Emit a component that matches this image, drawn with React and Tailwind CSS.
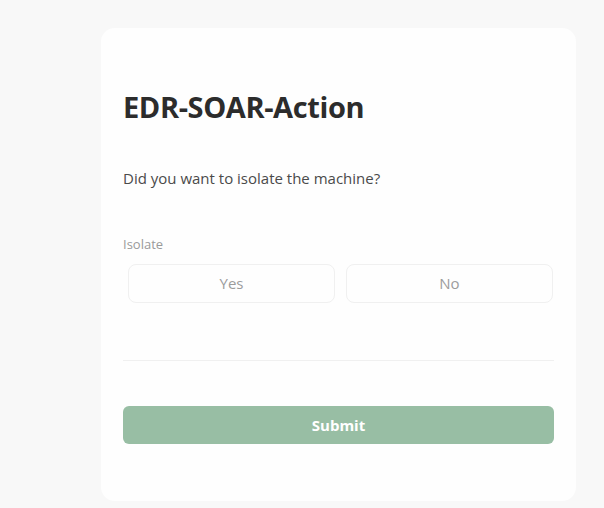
import React, { useState } from 'react';

function App() {
  const [choice, setChoice] = useState(null);

  return (
    <div className="min-h-screen w-full bg-[#f8f8f8] pt-[28px] pl-[101px]" style={{ fontFamily: '"Open Sans", "Noto Sans", sans-serif' }}>
      <div className="w-[475px] h-[473px] bg-[#fefefe] rounded-[14px] px-[22px] pt-[60px]">
        {/* Title */}
        <h1 className="text-[29px] leading-[38px] font-bold text-[#2c2c2c] tracking-[-0.4px]">EDR-SOAR-Action</h1>

        {/* Question */}
        <p className="mt-[42px] text-[15px] leading-[20px] text-[#4a4a4a]">Did you want to isolate the machine?</p>

        {/* Isolate options */}
        <div className="mt-[47px]">
          <div className="text-[13px] leading-[18px] text-[#9a9a9a]">Isolate</div>
          <div className="mt-[11px] flex gap-[11px] pl-[5px] pr-[1px]">
            {['Yes', 'No'].map((opt) => (
              <button
                key={opt}
                onClick={() => setChoice(opt)}
                className={
                  'flex-1 h-[39px] rounded-[8px] border text-[15px] ' +
                  (choice === opt ? 'border-[#98bea4] text-[#5f8f6e]' : 'border-[#f0f0f0] text-[#9c9c9c]')
                }
              >
                {opt}
              </button>
            ))}
          </div>
        </div>

        {/* Divider */}
        <div className="mt-[57px] h-px bg-[#f0f0f0]" />

        {/* Submit */}
        <button className="mt-[45px] w-full h-[38px] rounded-[6px] bg-[#98bea4] text-white text-[15px] font-bold">
          Submit
        </button>
      </div>
    </div>
  );
}

export default App;
